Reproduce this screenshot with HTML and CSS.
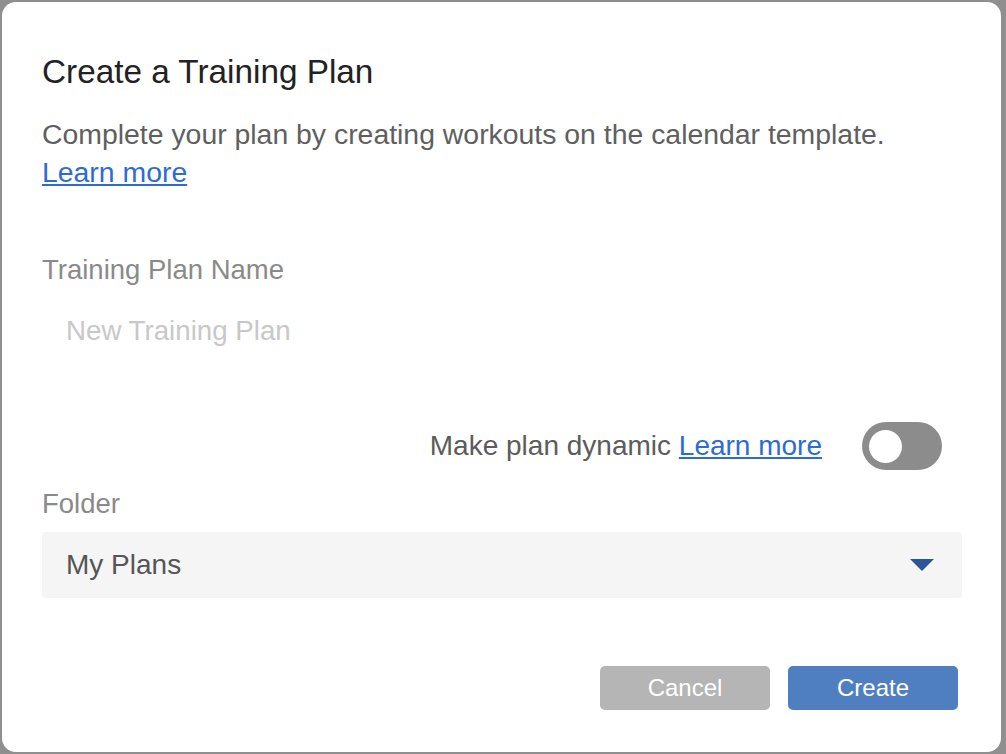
FILE: index.html
```html
<!DOCTYPE html>
<html lang="en">
<head>
    <meta charset="UTF-8">
    <meta name="viewport" content="width=device-width, initial-scale=1.0">
    <title>Create a Training Plan</title>
    <link rel="stylesheet" href="styles.css">
</head>
<body>
    <!-- Dialog -->
    <div class="dialog">
        <h1>Create a Training Plan</h1>
        <p class="intro">
            Complete your plan by creating workouts on the calendar template.<br>
            <a href="#">Learn more</a>
        </p>

        <label class="field-label" for="planName">Training Plan Name</label>
        <input type="text" id="planName" class="plan-input" placeholder="New Training Plan">

        <div class="dynamic-row">
            <span class="dynamic-text">Make plan dynamic <a href="#">Learn more</a></span>
            <span class="toggle"><span class="knob"></span></span>
        </div>

        <label class="field-label folder-label">Folder</label>
        <div class="select">
            <span>My Plans</span>
            <svg class="caret" width="24" height="12" viewBox="0 0 24 12"><path d="M0 0 L24 0 L12 12 Z" fill="#2b5797"/></svg>
        </div>

        <div class="buttons">
            <button type="button" class="btn cancel">Cancel</button>
            <button type="button" class="btn create">Create</button>
        </div>
    </div>
</body>
</html>
```

FILE: styles.css
```css
body {
    margin: 0;
    background-color: #8f8f8f;
    font-family: "Liberation Sans", Arial, sans-serif;
    height: 754px;
    overflow: hidden;
}
.dialog {
    box-sizing: border-box;
    width: 999px;
    height: 750px;
    margin: 2px 0 0 2px;
    padding: 50px 39px 0 40px;
    background: #ffffff;
    border-radius: 14px;
}
h1 {
    margin: 0;
    font-size: 33.3px;
    font-weight: normal;
    line-height: 40px;
    color: #222;
}
.intro {
    margin: 23px 0 0;
    font-size: 28.4px;
    line-height: 38px;
    color: #5f5f5f;
}
a {
    color: #2d6bd6;
    text-decoration: underline;
}
.field-label {
    display: block;
    margin-top: 62px;
    font-size: 27.5px;
    line-height: 34px;
    color: #8a8a8a;
}
.plan-input {
    display: block;
    box-sizing: border-box;
    width: 100%;
    height: 66px;
    margin-top: 11px;
    padding: 0 24px;
    border: none;
    outline: none;
    background: #fff;
    font-family: inherit;
    font-size: 27.7px;
    color: #333;
}
.plan-input::placeholder {
    color: #c8c8c8;
}
.dynamic-row {
    display: flex;
    justify-content: flex-end;
    align-items: center;
    gap: 40px;
    height: 48px;
    margin-top: 58px;
    padding-right: 20px;
}
.dynamic-text {
    font-size: 28px;
    color: #5c5c5c;
}
.toggle {
    display: flex;
    align-items: center;
    box-sizing: border-box;
    width: 80px;
    height: 48px;
    padding-left: 7px;
    border-radius: 24px;
    background: #8c8c8c;
}
.knob {
    width: 33px;
    height: 33px;
    border-radius: 50%;
    background: #fff;
}
.folder-label {
    margin-top: 17px;
}
.select {
    display: flex;
    justify-content: space-between;
    align-items: center;
    height: 66px;
    margin-top: 11px;
    padding: 0 28px 0 24px;
    border-radius: 4px;
    background: #f5f5f5;
    font-size: 28px;
    color: #555;
}
.caret {
    display: block;
}
.buttons {
    display: flex;
    justify-content: flex-end;
    gap: 18px;
    margin-top: 68px;
    padding-right: 4px;
}
.btn {
    width: 170px;
    height: 44px;
    border: none;
    border-radius: 5px;
    color: #fff;
    font-family: inherit;
    font-size: 24px;
    cursor: pointer;
}
.cancel {
    background: #b5b5b5;
}
.create {
    background: #4f7fc1;
}
```
